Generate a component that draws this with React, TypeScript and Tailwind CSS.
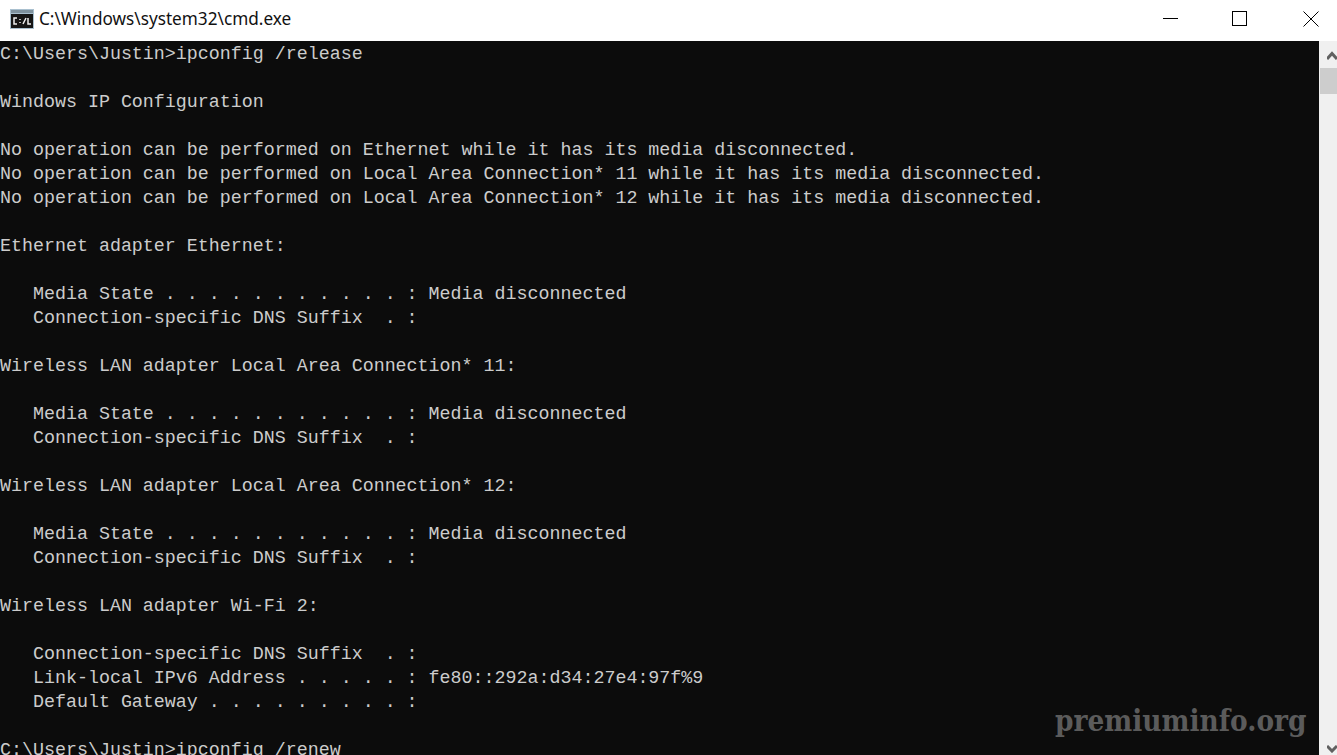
import React from 'react';

const lines = [
  'C:\\Users\\Justin>ipconfig /release',
  '',
  'Windows IP Configuration',
  '',
  'No operation can be performed on Ethernet while it has its media disconnected.',
  'No operation can be performed on Local Area Connection* 11 while it has its media disconnected.',
  'No operation can be performed on Local Area Connection* 12 while it has its media disconnected.',
  '',
  'Ethernet adapter Ethernet:',
  '',
  '   Media State . . . . . . . . . . . : Media disconnected',
  '   Connection-specific DNS Suffix  . :',
  '',
  'Wireless LAN adapter Local Area Connection* 11:',
  '',
  '   Media State . . . . . . . . . . . : Media disconnected',
  '   Connection-specific DNS Suffix  . :',
  '',
  'Wireless LAN adapter Local Area Connection* 12:',
  '',
  '   Media State . . . . . . . . . . . : Media disconnected',
  '   Connection-specific DNS Suffix  . :',
  '',
  'Wireless LAN adapter Wi-Fi 2:',
  '',
  '   Connection-specific DNS Suffix  . :',
  '   Link-local IPv6 Address . . . . . : fe80::292a:d34:27e4:97f%9',
  '   Default Gateway . . . . . . . . . :',
  '',
  'C:\\Users\\Justin>ipconfig /renew',
];

function CmdIcon() {
  return (
    <svg width="24" height="20" viewBox="0 0 24 20" className="shrink-0">
      <rect x="0" y="0" width="24" height="20" fill="#a9c0cf" />
      <rect x="1" y="1" width="22" height="3" fill="#7f929e" />
      <rect x="1" y="5" width="22" height="14" fill="#161616" />
      <path d="M7 9H4v6h3M10 10v1M10 13v1M13 15l3-6M18 9v6h3" stroke="#eeeeee" strokeWidth="1.5" fill="none" />
    </svg>
  );
}

export default function App() {
  return (
    <div className="relative flex h-[755px] w-[1337px] flex-col overflow-hidden bg-white">
      {/* TITLE BAR */}
      <header className="flex h-[41px] shrink-0 items-center bg-white pb-[3px] pl-[10px]">
        <CmdIcon />
        <span className="ml-[5px] text-[17.2px] text-[#111] font-['Noto_Sans',sans-serif]">C:\Windows\system32\cmd.exe</span>
        <div className="ml-auto flex items-center">
          <svg width="16" height="16" viewBox="0 0 16 16" className="mr-[53px]"><path d="M0 7.5h15" stroke="#000" /></svg>
          <svg width="16" height="16" viewBox="0 0 16 16" className="mr-[55px]"><rect x="0.5" y="0.5" width="14" height="14" fill="none" stroke="#000" /></svg>
          <svg width="16" height="16" viewBox="0 0 16 16" className="mr-[18px]"><path d="M0.5 0.5l15 15M15.5 0.5l-15 15" stroke="#000" /></svg>
        </div>
      </header>

      <div className="flex min-h-0 flex-1">
        {/* CONSOLE */}
        <main className="min-w-0 flex-1 bg-[#0c0c0c] pt-[2px] font-['Liberation_Mono',monospace] text-[18.32px] leading-[24px] text-[#cccccc]">
          {lines.map((l, i) => (
            <div key={i} className="h-[24px] whitespace-pre">{l}</div>
          ))}
        </main>
        {/* SCROLLBAR */}
        <aside className="flex w-[18px] shrink-0 flex-col bg-[#f0f0f0] pl-px">
          <div className="flex h-[27px] shrink-0 items-center justify-end pt-[2px]">
            <svg width="10" height="9" viewBox="0 0 10 9"><path d="M0 8l5-5.5L10 8" fill="none" stroke="#606060" strokeWidth="3" /></svg>
          </div>
          <div className="h-[26px] shrink-0 bg-[#cdcdcd]" />
          <div className="mt-auto flex h-[24px] shrink-0 items-center justify-end pt-[12px]">
            <svg width="10" height="8" viewBox="0 0 10 8"><path d="M0 1l5 5L10 1" fill="none" stroke="#606060" strokeWidth="3" /></svg>
          </div>
        </aside>
      </div>

      {/* WATERMARK */}
      <span className="absolute left-[1055px] top-[701px] font-['DejaVu_Serif_Condensed','DejaVu_Serif',serif] text-[29.4px] font-bold leading-[40px] text-[#5b5b5b]">premiuminfo.org</span>
    </div>
  );
}
